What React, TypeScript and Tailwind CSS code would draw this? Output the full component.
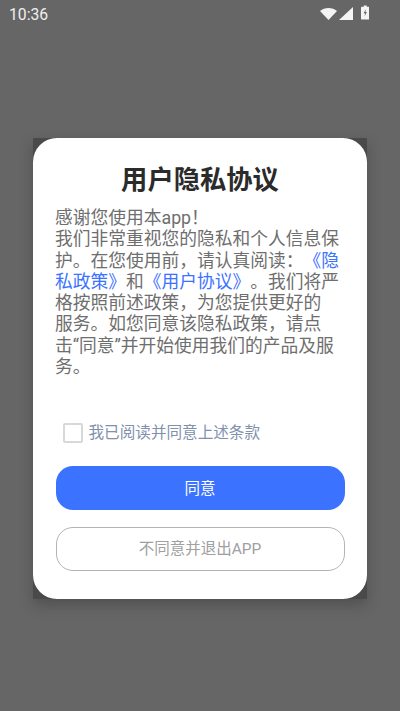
import React from 'react';

const cjk = { fontFamily: 'Roboto, "Noto Sans CJK SC", sans-serif' };

const StatusBar = () => (
  <div className="flex h-[28px] items-center justify-between pl-[9px] pr-[31px] text-[15.7px] text-[#f0f0f0]">
    <span className="pt-[1px]">10:36</span>
    <div className="mb-[3px] flex items-center">
      <svg width="17" height="13" viewBox="0 0 17 13" className="mr-[2px] mt-[2px]">
        <path d="M0 4 C4.5 0 12.5 0 17 4 L8.5 13 Z" fill="#f4f4f4" />
      </svg>
      <svg width="14" height="13" viewBox="0 0 14 13" className="mr-[8px] mt-[2px]">
        <path d="M14 0 V13 H0 Z" fill="#f4f4f4" />
      </svg>
      <svg width="8.5" height="15" viewBox="0 0 9 15">
        <path d="M3 0 H6 V1.5 H8 A1 1 0 0 1 9 2.5 V14 A1 1 0 0 1 8 15 H1 A1 1 0 0 1 0 14 V2.5 A1 1 0 0 1 1 1.5 H3 Z" fill="#f4f4f4" />
        <path d="M5 4 L2.8 8.4 H4.3 L3.9 11.5 L6.2 7 H4.7 Z" fill="#666666" />
      </svg>
    </div>
  </div>
);

const App: React.FC = () => {
  return (
    <div className="h-[711px] w-[400px] overflow-hidden bg-[#666666]" style={cjk}>
      <StatusBar />
      <div className="mx-[33px] mt-[110px] h-[461px] bg-[#4a4a4a] shadow-[0_6px_14px_rgba(0,0,0,0.22)]">
        <div className="flex h-full flex-col rounded-[24px] bg-white px-[22.5px]">
          <h1 className="mt-[25px] h-[34px] text-center text-[26.3px] font-bold leading-[34px] text-[#2b2b2b]">
            用户隐私协议
          </h1>
          <p className="-ml-[0.5px] mt-[11px] h-[170px] whitespace-nowrap text-[17.75px] leading-[21.3px] text-[#6e6e6e] [text-spacing-trim:space-all]">
            感谢您使用本app！
            <br />
            我们非常重视您的隐私和个人信息保
            <br />
            护。在您使用前，请认真阅读：<span className="text-[#3b72ff]">《隐</span>
            <br />
            <span className="text-[#3b72ff]">私政策》</span>和<span className="text-[#3b72ff]">《用户协议》</span>。我们将严
            <br />
            格按照前述政策，为您提供更好的
            <br />
            服务。如您同意该隐私政策，请点
            <br />
            击“同意”并开始使用我们的产品及服
            <br />
            务。
          </p>
          <div className="mt-[45px] flex h-[20px] items-center pl-[7.5px]">
            <div className="h-[20px] w-[20px] rounded-[2px] border-2 border-[#d8d8d8] bg-white" />
            <span className="ml-[5.5px] pt-[2px] text-[15.6px] text-[#8090ad]">我已阅读并同意上述条款</span>
          </div>
          <button className="mt-[23px] flex h-[44px] items-center justify-center rounded-[17px] bg-[#3b72ff] pt-[3px] text-[15.5px] text-white">
            同意
          </button>
          <button className="mt-[17px] flex h-[44px] items-center justify-center rounded-[17px] border border-[#b4b4b4] bg-white pt-[2px] text-[15.5px] text-[#a0a0a0]">
            不同意并退出APP
          </button>
        </div>
      </div>
    </div>
  );
};

export default App;
